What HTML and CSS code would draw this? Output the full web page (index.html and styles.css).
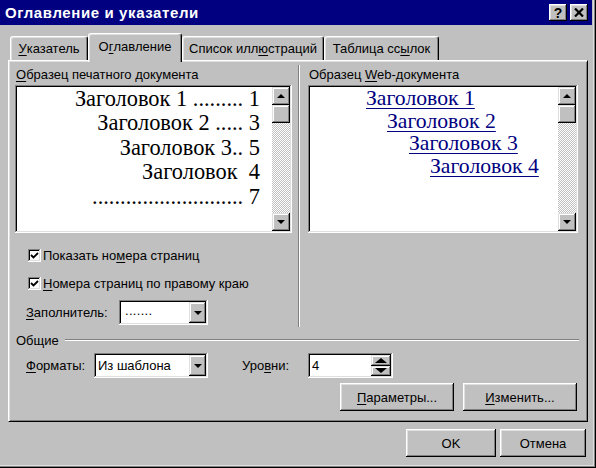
FILE: index.html
```html
<!DOCTYPE html>
<html lang="ru">
<head>
<meta charset="utf-8">
<title>Оглавление и указатели</title>
<link rel="stylesheet" href="styles.css">
</head>
<body>
<div class="window">
  <div class="titlebar">
    <span class="title">Оглавление и указатели</span>
    <div class="tbtns">
      <span class="tbtn q">?</span>
      <span class="tbtn"><svg width="10" height="9" viewBox="0 0 10 9"><path d="M1 0.5 L9 8.5 M9 0.5 L1 8.5" stroke="#000" stroke-width="2.2" fill="none"/></svg></span>
    </div>
  </div>
  <div class="content">
    <div class="tabs">
      <div class="tab t1"><u>У</u>казатель</div>
      <div class="tab sel t2">О<u>г</u>лавление</div>
      <div class="tab t3">Список илл<u>ю</u>страций</div>
      <div class="tab t4">Таблица сс<u>ы</u>лок</div>
    </div>
    <div class="panel">
      <div class="top">
        <div class="col left">
          <div class="label"><u>О</u>бразец печатного документа</div>
          <div class="preview">
            <div class="pv-text print">
              <div>Заголовок 1 ......... 1</div>
              <div>Заголовок 2 ..... 3</div>
              <div>Заголовок 3.. 5</div>
              <div>Заголовок&nbsp; 4</div>
              <div>........................... 7</div>
            </div>
            <div class="scroll">
              <div class="sbtn"><span class="arr up"></span></div>
              <div class="sbtn thumb"></div>
              <div class="track"></div>
              <div class="sbtn"><span class="arr down"></span></div>
            </div>
          </div>
          <div class="chkrow r1"><span class="chk"><svg width="9" height="9" viewBox="0 0 9 9"><path d="M1 4 L3.5 6.5 L8 2" stroke="#000" stroke-width="1.8" fill="none"/></svg></span><span>Показать но<u>м</u>ера страниц</span></div>
          <div class="chkrow r2"><span class="chk"><svg width="9" height="9" viewBox="0 0 9 9"><path d="M1 4 L3.5 6.5 L8 2" stroke="#000" stroke-width="1.8" fill="none"/></svg></span><span><u>Н</u>омера страниц по правому краю</span></div>
          <div class="fieldrow fill">
            <span class="flabel w-fill"><u>З</u>аполнитель:</span>
            <div class="combo c-fill"><span class="ctext dots">.......</span><span class="cbtn"><span class="arr down"></span></span></div>
          </div>
        </div>
        <div class="divider"></div>
        <div class="col right">
          <div class="label">Образец <u>W</u>eb-документа</div>
          <div class="preview">
            <div class="pv-text web">
              <div class="l1"><a>Заголовок 1</a></div>
              <div class="l2"><a>Заголовок 2</a></div>
              <div class="l3"><a>Заголовок 3</a></div>
              <div class="l4"><a>Заголовок 4</a></div>
            </div>
            <div class="scroll">
              <div class="sbtn"><span class="arr up"></span></div>
              <div class="sbtn thumb"></div>
              <div class="track"></div>
              <div class="sbtn"><span class="arr down"></span></div>
            </div>
          </div>
        </div>
      </div>
      <div class="group"><span>Общие</span><span class="gline"></span></div>
      <div class="fieldrow formats">
        <span class="flabel w-fmt"><u>Ф</u>орматы:</span>
        <div class="combo c-fmt"><span class="ctext">Из шаблона</span><span class="cbtn"><span class="arr down"></span></span></div>
        <span class="flabel w-lvl">Уро<u>в</u>ни:</span>
        <div class="spin"><span class="ctext">4</span><span class="sbtns"><span class="spbtn"><span class="arr bigup"></span></span><span class="spbtn"><span class="arr bigdown"></span></span></span></div>
      </div>
      <div class="btnrow">
        <div class="btn w114"><u>П</u>араметры...</div>
        <div class="btn w114"><u>И</u>зменить...</div>
      </div>
    </div>
    <div class="footer">
      <div class="btn ok">OK</div>
      <div class="btn cancel">Отмена</div>
    </div>
  </div>
</div>
</body>
</html>
```

FILE: styles.css
```css
* { box-sizing: border-box; }
html, body { margin: 0; padding: 0; }
body {
  width: 596px;
  height: 468px;
  overflow: hidden;
  background: #c0c0c0;
  font-family: "Liberation Sans", Arial, sans-serif;
  font-size: 13px;
  color: #000;
}
u { text-decoration: underline; text-underline-offset: 2px; }

.window {
  width: 596px;
  height: 468px;
  background: #c0c0c0;
  padding: 0 4px 4px 0;
  box-shadow: inset -1px -1px #000, inset -2px -2px #808080, inset -3px -3px #dfdfdf;
}

.titlebar {
  height: 25px;
  background: #000080;
  color: #fff;
  display: flex;
  align-items: center;
  justify-content: space-between;
  padding: 0 4px 0 5px;
}
.title {
  font-weight: bold;
  font-size: 15px;
  letter-spacing: 0.6px;
}
.tbtns { display: flex; gap: 3px; }
.tbtn {
  width: 18px;
  height: 17px;
  background: #c0c0c0;
  color: #000;
  display: flex;
  align-items: center;
  justify-content: center;
  font-weight: bold;
  font-size: 14px;
  box-shadow: inset -1px -1px #000, inset 1px 1px #fff, inset -2px -2px #808080, inset 2px 2px #dfdfdf;
}

.content { padding: 8px 0 0 8px; }

.tabs {
  display: flex;
  align-items: flex-start;
  height: 27px;
  padding-left: 2px;
}
.tab {
  height: 24px;
  margin-top: 3px;
  border-top: 1px solid #fff;
  border-left: 1px solid #fff;
  border-right: 1px solid #000;
  border-radius: 3px 3px 0 0;
  box-shadow: inset -1px 0 #808080, inset 1px 1px #dfdfdf;
  background: #c0c0c0;
  display: flex;
  align-items: center;
  justify-content: center;
  white-space: nowrap;
  padding-bottom: 1px;
}
.tab.sel {
  height: 29px;
  margin-top: 0;
  position: relative;
  z-index: 1;
  padding-bottom: 3px;
}
.t1 { width: 78px; }
.t2 { width: 94px; }
.t3 { width: 142px; }
.t4 { width: 115px; }

.panel {
  width: 580px;
  height: 362px;
  border-top: 1px solid #fff;
  border-left: 1px solid #fff;
  border-right: 1px solid #000;
  border-bottom: 1px solid #000;
  box-shadow: inset 1px 1px #dfdfdf, inset -1px -1px #808080;
  padding: 6px 8px 0 6px;
}

.top { display: flex; height: 260px; }
.col { display: flex; flex-direction: column; }
.col.left { width: 277px; }
.col.right { width: 270px; margin-left: 8px; }
.divider {
  width: 2px;
  margin-left: 6px;
  margin-top: -2px;
  border-left: 1px solid #808080;
  border-right: 1px solid #fff;
}
.label { height: 16px; line-height: 16px; padding-left: 1px; white-space: nowrap; }

.preview {
  margin-top: 2px;
  height: 148px;
  display: flex;
  padding: 2px;
  background: #fff;
  box-shadow: inset -1px -1px #fff, inset 1px 1px #808080, inset -2px -2px #dfdfdf, inset 2px 2px #000;
}
.pv-text {
  flex: 1;
  min-width: 0;
  overflow: hidden;
  font-family: "Liberation Serif", "Times New Roman", serif;
}
.pv-text > div { white-space: nowrap; }
.pv-text.print {
  font-size: 22.4px;
  text-align: right;
  padding-right: 12px;
  line-height: 24.4px;
}
.pv-text.web { font-size: 21.7px; line-height: 22.7px; }
.pv-text.web a { color: #000080; text-decoration: underline; text-decoration-thickness: 1px; text-underline-offset: 3px; }
.l1 { padding-left: 56px; }
.l2 { padding-left: 77px; }
.l3 { padding-left: 99px; }
.l4 { padding-left: 120px; }

.scroll {
  width: 18px;
  flex: none;
  display: flex;
  flex-direction: column;
}
.sbtn {
  height: 18px;
  flex: none;
  background: #c0c0c0;
  display: flex;
  align-items: center;
  justify-content: center;
  box-shadow: inset -1px -1px #000, inset 1px 1px #dfdfdf, inset -2px -2px #808080, inset 2px 2px #fff;
}
.track {
  flex: 1;
  background-color: #c0c0c0;
  background-image: conic-gradient(#fff 25%, #c0c0c0 0 50%, #fff 0 75%, #c0c0c0 0);
  background-size: 2px 2px;
}
.arr { width: 0; height: 0; display: block; }
.arr.up { border-left: 4px solid transparent; border-right: 4px solid transparent; border-bottom: 4px solid #000; }
.arr.down { border-left: 4px solid transparent; border-right: 4px solid transparent; border-top: 4px solid #000; }
.arr.bigup { border-left: 6px solid transparent; border-right: 6px solid transparent; border-bottom: 5px solid #000; }
.arr.bigdown { border-left: 6px solid transparent; border-right: 6px solid transparent; border-top: 5px solid #000; }

.chkrow { display: flex; align-items: center; height: 16px; margin-left: 13px; gap: 2px; white-space: nowrap; }
.chkrow.r1 { margin-top: 14px; }
.chkrow.r2 { margin-top: 12px; }
.chk {
  width: 13px;
  height: 13px;
  background: #fff;
  display: flex;
  align-items: center;
  justify-content: center;
  box-shadow: inset -1px -1px #fff, inset 1px 1px #808080, inset -2px -2px #dfdfdf, inset 2px 2px #000;
}

.fieldrow { display: flex; align-items: center; }
.fieldrow.fill { margin-top: 9px; margin-left: 11px; }
.flabel { white-space: nowrap; }
.w-fill { width: 93px; }
.w-fmt { width: 68px; }
.w-lvl { width: 66px; margin-left: 34px; }

.combo, .spin {
  height: 25px;
  background: #fff;
  display: flex;
  align-items: stretch;
  padding: 2px;
  box-shadow: inset -1px -1px #fff, inset 1px 1px #808080, inset -2px -2px #dfdfdf, inset 2px 2px #000;
}
.c-fill { width: 89px; }
.c-fmt { width: 114px; }
.ctext { flex: 1; display: flex; align-items: center; padding-left: 2px; white-space: nowrap; }
.ctext.dots { padding-left: 4px; padding-bottom: 4px; font-size: 13px; letter-spacing: 0.3px; color: #000; }
.cbtn {
  width: 17px;
  background: #c0c0c0;
  display: flex;
  align-items: center;
  justify-content: center;
  box-shadow: inset -1px -1px #000, inset 1px 1px #dfdfdf, inset -2px -2px #808080, inset 2px 2px #fff;
}
.spin { width: 85px; }
.sbtns { width: 20px; display: flex; flex-direction: column; }
.spbtn {
  flex: 1;
  background: #c0c0c0;
  display: flex;
  align-items: center;
  justify-content: center;
  box-shadow: inset -1px -1px #000, inset 1px 1px #dfdfdf, inset -2px -2px #808080, inset 2px 2px #fff;
}

.group { display: flex; align-items: center; height: 16px; margin-top: 5px; padding-left: 1px; }
.gline { flex: 1; margin-left: 6px; height: 2px; border-top: 1px solid #808080; border-bottom: 1px solid #fff; }

.fieldrow.formats { margin-top: 5px; margin-left: 11px; }

.btnrow { display: flex; justify-content: flex-end; gap: 9px; margin-top: 5px; margin-right: 2px; }

.btn {
  height: 28px;
  background: #c0c0c0;
  display: flex;
  align-items: center;
  justify-content: center;
  white-space: nowrap;
  box-shadow: inset -1px -1px #000, inset 1px 1px #fff, inset -2px -2px #808080, inset 2px 2px #dfdfdf;
}
.w114 { width: 114px; }

.footer { display: flex; justify-content: flex-end; gap: 4px; padding-top: 7px; padding-right: 6px; }
.ok { width: 90px; }
.cancel { width: 86px; }
```
